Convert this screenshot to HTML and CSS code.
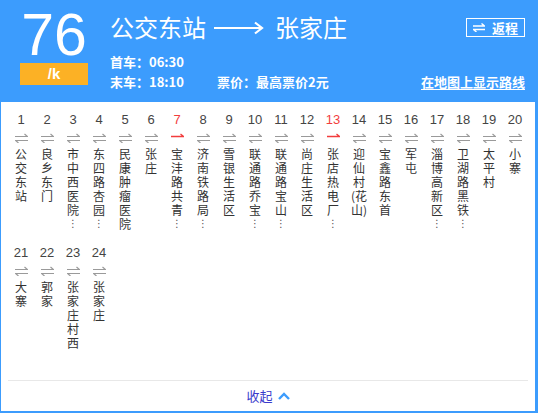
FILE: index.html
```html
<!DOCTYPE html>
<html lang="zh-CN">
<head>
<meta charset="utf-8">
<title>76路</title>
<link rel="stylesheet" href="styles.css">
</head>
<body>
<div class="wrap">
  <div class="header">
    <div class="line-id">
      <div class="num">76</div>
      <div class="badge">/k</div>
    </div>
    <div class="info">
      <div class="title-row">
        <div class="route">公交东站<svg class="route-arrow" width="50" height="14" viewBox="0 0 50 14"><path d="M0 7H48M41 1.5L48 7L41 12.5" fill="none" stroke="#fff" stroke-width="2.2"/></svg>张家庄</div>
        <a class="back"><svg class="back-ico" width="12" height="9" viewBox="0 0 12 9"><path d="M0 3H11.5L8.5 0.5M12 6.5H0.5L3.5 9" fill="none" stroke="#fff" stroke-width="1.4"/></svg>返程</a>
      </div>
      <div class="meta">首车：06:30</div>
      <div class="meta meta-row"><span class="last">末车：18:10</span><span class="price">票价：最高票价2元</span><a class="map">在地图上显示路线</a></div>
    </div>
  </div>

  <div class="stops">
    <div class="stop"><span class="no">1</span><svg class="dir" viewBox="0 0 13 10"><path d="M0 3.5H12.5L9.5 1M13 7.5H0.5L3.5 10" fill="none" stroke="#9a9a9a" stroke-width="1.2"/></svg><span class="nm">公交东站</span></div>
    <div class="stop"><span class="no">2</span><svg class="dir" viewBox="0 0 13 10"><path d="M0 3.5H12.5L9.5 1M13 7.5H0.5L3.5 10" fill="none" stroke="#9a9a9a" stroke-width="1.2"/></svg><span class="nm">良乡东门</span></div>
    <div class="stop"><span class="no">3</span><svg class="dir" viewBox="0 0 13 10"><path d="M0 3.5H12.5L9.5 1M13 7.5H0.5L3.5 10" fill="none" stroke="#9a9a9a" stroke-width="1.2"/></svg><span class="nm">市中西医院<span class="more">⋮</span></span></div>
    <div class="stop"><span class="no">4</span><svg class="dir" viewBox="0 0 13 10"><path d="M0 3.5H12.5L9.5 1M13 7.5H0.5L3.5 10" fill="none" stroke="#9a9a9a" stroke-width="1.2"/></svg><span class="nm">东四路杏园<span class="more">⋮</span></span></div>
    <div class="stop"><span class="no">5</span><svg class="dir" viewBox="0 0 13 10"><path d="M0 3.5H12.5L9.5 1M13 7.5H0.5L3.5 10" fill="none" stroke="#9a9a9a" stroke-width="1.2"/></svg><span class="nm">民康肿瘤医院</span></div>
    <div class="stop"><span class="no">6</span><svg class="dir" viewBox="0 0 13 10"><path d="M0 3.5H12.5L9.5 1M13 7.5H0.5L3.5 10" fill="none" stroke="#9a9a9a" stroke-width="1.2"/></svg><span class="nm">张庄</span></div>
    <div class="stop cur"><span class="no">7</span><svg class="dir" viewBox="0 0 13 10"><path d="M0 3.5H12.5L9.5 1" fill="none" stroke="#f23d3d" stroke-width="1.3"/></svg><span class="nm">宝沣路共青<span class="more">⋮</span></span></div>
    <div class="stop"><span class="no">8</span><svg class="dir" viewBox="0 0 13 10"><path d="M0 3.5H12.5L9.5 1M13 7.5H0.5L3.5 10" fill="none" stroke="#9a9a9a" stroke-width="1.2"/></svg><span class="nm">济南铁路局<span class="more">⋮</span></span></div>
    <div class="stop"><span class="no">9</span><svg class="dir" viewBox="0 0 13 10"><path d="M0 3.5H12.5L9.5 1M13 7.5H0.5L3.5 10" fill="none" stroke="#9a9a9a" stroke-width="1.2"/></svg><span class="nm">雪银生活区</span></div>
    <div class="stop"><span class="no">10</span><svg class="dir" viewBox="0 0 13 10"><path d="M0 3.5H12.5L9.5 1M13 7.5H0.5L3.5 10" fill="none" stroke="#9a9a9a" stroke-width="1.2"/></svg><span class="nm">联通路乔宝<span class="more">⋮</span></span></div>
    <div class="stop"><span class="no">11</span><svg class="dir" viewBox="0 0 13 10"><path d="M0 3.5H12.5L9.5 1M13 7.5H0.5L3.5 10" fill="none" stroke="#9a9a9a" stroke-width="1.2"/></svg><span class="nm">联通路宝山<span class="more">⋮</span></span></div>
    <div class="stop"><span class="no">12</span><svg class="dir" viewBox="0 0 13 10"><path d="M0 3.5H12.5L9.5 1M13 7.5H0.5L3.5 10" fill="none" stroke="#9a9a9a" stroke-width="1.2"/></svg><span class="nm">尚庄生活区</span></div>
    <div class="stop cur"><span class="no">13</span><svg class="dir" viewBox="0 0 13 10"><path d="M0 3.5H12.5L9.5 1" fill="none" stroke="#f23d3d" stroke-width="1.3"/></svg><span class="nm">张店热电厂<span class="more">⋮</span></span></div>
    <div class="stop"><span class="no">14</span><svg class="dir" viewBox="0 0 13 10"><path d="M0 3.5H12.5L9.5 1M13 7.5H0.5L3.5 10" fill="none" stroke="#9a9a9a" stroke-width="1.2"/></svg><span class="nm">迎仙村(花山)</span></div>
    <div class="stop"><span class="no">15</span><svg class="dir" viewBox="0 0 13 10"><path d="M0 3.5H12.5L9.5 1M13 7.5H0.5L3.5 10" fill="none" stroke="#9a9a9a" stroke-width="1.2"/></svg><span class="nm">宝鑫路东首</span></div>
    <div class="stop"><span class="no">16</span><svg class="dir" viewBox="0 0 13 10"><path d="M0 3.5H12.5L9.5 1M13 7.5H0.5L3.5 10" fill="none" stroke="#9a9a9a" stroke-width="1.2"/></svg><span class="nm">军屯</span></div>
    <div class="stop"><span class="no">17</span><svg class="dir" viewBox="0 0 13 10"><path d="M0 3.5H12.5L9.5 1M13 7.5H0.5L3.5 10" fill="none" stroke="#9a9a9a" stroke-width="1.2"/></svg><span class="nm">淄博高新区<span class="more">⋮</span></span></div>
    <div class="stop"><span class="no">18</span><svg class="dir" viewBox="0 0 13 10"><path d="M0 3.5H12.5L9.5 1M13 7.5H0.5L3.5 10" fill="none" stroke="#9a9a9a" stroke-width="1.2"/></svg><span class="nm">卫湖路黑铁<span class="more">⋮</span></span></div>
    <div class="stop"><span class="no">19</span><svg class="dir" viewBox="0 0 13 10"><path d="M0 3.5H12.5L9.5 1M13 7.5H0.5L3.5 10" fill="none" stroke="#9a9a9a" stroke-width="1.2"/></svg><span class="nm">太平村</span></div>
    <div class="stop"><span class="no">20</span><svg class="dir" viewBox="0 0 13 10"><path d="M0 3.5H12.5L9.5 1M13 7.5H0.5L3.5 10" fill="none" stroke="#9a9a9a" stroke-width="1.2"/></svg><span class="nm">小寨</span></div>
    <div class="stop"><span class="no">21</span><svg class="dir" viewBox="0 0 13 10"><path d="M0 3.5H12.5L9.5 1M13 7.5H0.5L3.5 10" fill="none" stroke="#9a9a9a" stroke-width="1.2"/></svg><span class="nm">大寨</span></div>
    <div class="stop"><span class="no">22</span><svg class="dir" viewBox="0 0 13 10"><path d="M0 3.5H12.5L9.5 1M13 7.5H0.5L3.5 10" fill="none" stroke="#9a9a9a" stroke-width="1.2"/></svg><span class="nm">郭家</span></div>
    <div class="stop"><span class="no">23</span><svg class="dir" viewBox="0 0 13 10"><path d="M0 3.5H12.5L9.5 1M13 7.5H0.5L3.5 10" fill="none" stroke="#9a9a9a" stroke-width="1.2"/></svg><span class="nm">张家庄村西</span></div>
    <div class="stop"><span class="no">24</span><svg class="dir" viewBox="0 0 13 10"><path d="M0 3.5H12.5L9.5 1M13 7.5H0.5L3.5 10" fill="none" stroke="#9a9a9a" stroke-width="1.2"/></svg><span class="nm">张家庄</span></div>
  </div>

  <div class="footer">
    <a class="fold">收起<svg class="chev" width="12" height="8" viewBox="0 0 12 8"><path d="M1 7L6 2L11 7" fill="none" stroke="#3c9cfd" stroke-width="2.4"/></svg></a>
  </div>
</div>
</body>
</html>
```

FILE: styles.css
```css
html, body {
  margin: 0;
  padding: 0;
  background: #fff;
}

.wrap {
  width: 538px;
  box-sizing: border-box;
  border-style: solid;
  border-color: #3c9cfd;
  border-width: 0 3px 2px 1px;
  background: #fff;
  font-family: "Noto Sans CJK SC", "Liberation Sans", sans-serif;
}

/* header */
.header {
  height: 102px;
  background: #3c9cfd;
  display: flex;
  align-items: flex-start;
  padding: 0 10px 0 19px;
  color: #fff;
}

.line-id {
  width: 68px;
  margin-top: 7px;
  margin-right: 22px;
  flex: none;
}

.num {
  font-family: "Liberation Sans", Arial, sans-serif;
  font-size: 59px;
  line-height: 56px;
  text-align: center;
  color: #fff;
}

.badge {
  height: 22px;
  background: #fcb125;
  color: #fff;
  font-family: "Liberation Sans", Arial, sans-serif;
  font-weight: bold;
  font-size: 15px;
  line-height: 22px;
  text-align: center;
}

.info {
  flex: 1;
  margin-top: 12px;
}

.title-row {
  height: 30px;
  display: flex;
  align-items: center;
  justify-content: space-between;
}

.route {
  display: flex;
  align-items: center;
  font-size: 24px;
  line-height: 30px;
}

.route-arrow {
  display: block;
  margin: 1px 11px 0 8px;
}

.back {
  height: 19px;
  box-sizing: border-box;
  border: 1px solid #fff;
  display: flex;
  align-items: center;
  padding: 0 6px;
  font-size: 13px;
  font-weight: bold;
  line-height: 17px;
  color: #fff;
}

.back-ico {
  display: block;
  margin-right: 7px;
}

.meta {
  font-size: 13px;
  font-weight: bold;
  line-height: 20px;
}

.meta:first-of-type {
  margin-top: 10px;
}

.title-row + .meta {
  margin-top: 10px;
}

.meta-row {
  display: flex;
}

.last {
  width: 107px;
  flex: none;
}

.map {
  margin-left: auto;
  color: #fff;
  text-decoration: underline;
  text-underline-offset: 2px;
}

/* stops */
.stops {
  display: flex;
  flex-wrap: wrap;
  align-items: flex-start;
  row-gap: 14px;
  padding: 10px 7px 30px;
}

.stop {
  width: 26px;
  display: flex;
  flex-direction: column;
  align-items: center;
}

.no {
  font-family: "Liberation Sans", Arial, sans-serif;
  font-size: 13px;
  line-height: 16px;
  color: #444;
}

.cur .no {
  color: #f23d3d;
}

.dir {
  display: block;
  width: 13px;
  height: 10px;
  margin: 5px 0 4px;
}

.nm {
  width: 17px;
  font-family: "Noto Sans CJK SC", sans-serif;
  font-size: 12px;
  line-height: 14px;
  color: #333;
  text-align: center;
  word-break: break-all;
}

.more {
  display: block;
  font-family: "DejaVu Sans", sans-serif;
  font-size: 10px;
  line-height: 14px;
  color: #555;
}

/* footer */
.footer {
  margin: 0 7px;
  border-top: 1px solid #e8e8e8;
  height: 30px;
  display: flex;
  justify-content: center;
  align-items: center;
}

.fold {
  display: flex;
  align-items: center;
  font-size: 13px;
  line-height: 30px;
  color: #3b3bcc;
}

.chev {
  display: block;
  margin-left: 5px;
}
```
